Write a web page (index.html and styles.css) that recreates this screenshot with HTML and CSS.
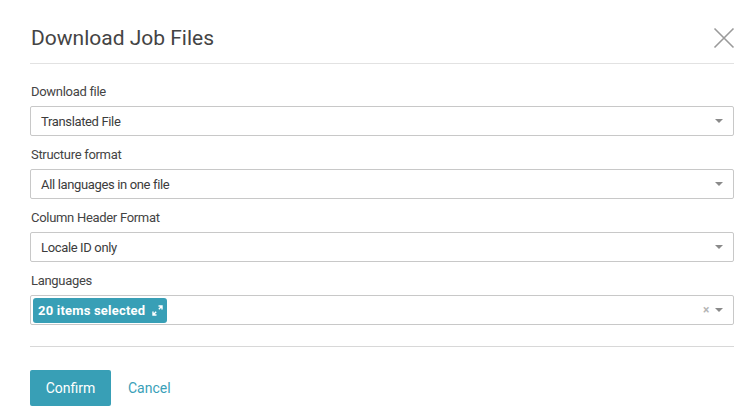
FILE: index.html
```html
<!DOCTYPE html>
<html>
<head>
<meta charset="utf-8">
<link rel="stylesheet" href="styles.css">
</head>
<body>
<div class="modal">
  <div class="modal-header">
    <h1 class="modal-title">Download Job Files</h1>
    <button class="close-btn" aria-label="Close">
      <svg width="22" height="22" viewBox="0 0 22 22"><path d="M1.5 1.5 L20.5 20.5 M20.5 1.5 L1.5 20.5" stroke="#9a9a9a" stroke-width="1.6" fill="none"/></svg>
    </button>
  </div>
  <div class="modal-body">
    <div class="field">
      <label class="field-label">Download file</label>
      <div class="select">
        <span class="select-value">Translated File</span>
        <span class="caret"></span>
      </div>
    </div>
    <div class="field">
      <label class="field-label">Structure format</label>
      <div class="select">
        <span class="select-value">All languages in one file</span>
        <span class="caret"></span>
      </div>
    </div>
    <div class="field">
      <label class="field-label">Column Header Format</label>
      <div class="select">
        <span class="select-value">Locale ID only</span>
        <span class="caret"></span>
      </div>
    </div>
    <div class="field">
      <label class="field-label">Languages</label>
      <div class="select multi">
        <span class="tag">20 items selected
          <svg class="expand" width="11" height="11" viewBox="0 0 11 11"><path d="M6.5 1 H10 V4.5 M10 1 L6.8 4.2 M4.5 10 H1 V6.5 M1 10 L4.2 6.8" stroke="#fff" stroke-width="1.4" fill="none"/></svg>
        </span>
        <span class="clear">×</span>
        <span class="caret"></span>
      </div>
    </div>
  </div>
  <div class="modal-footer">
    <button class="btn-primary">Confirm</button>
    <button class="btn-link">Cancel</button>
  </div>
</div>
</body>
</html>
```

FILE: styles.css
```css
html, body {
  margin: 0;
  padding: 0;
  background: #fff;
}
body {
  font-family: "Roboto", "Liberation Sans", sans-serif;
  color: #444;
}
.modal {
  padding: 0 22px 0 30px;
}
.modal-header {
  height: 64px;
  border-bottom: 1px solid #e2e2e2;
  display: flex;
  align-items: center;
  justify-content: space-between;
  padding-top: 12px;
  box-sizing: border-box;
}
.modal-title {
  margin: 0 0 0 1px;
  font-size: 21px;
  font-weight: 400;
  color: #444;
}
.close-btn {
  border: 0;
  background: none;
  padding: 0;
  margin-right: -1px;
  display: flex;
  cursor: pointer;
}
.modal-body {
  padding-top: 17px;
}
.field {
  margin-bottom: 8px;
}
.field-label {
  display: block;
  font-size: 13px;
  line-height: 22px;
  margin: 0 0 3px 1px;
  color: #444;
  letter-spacing: -0.3px;
}
.select {
  height: 30px;
  box-sizing: border-box;
  border: 1px solid #c8c8c8;
  border-radius: 2px;
  display: flex;
  align-items: center;
  padding: 0 10px 0 10px;
  font-size: 13px;
  color: #3c3c3c;
  letter-spacing: -0.35px;
}
.select-value {
  flex: 1;
}
.caret {
  width: 0;
  height: 0;
  border-left: 4px solid transparent;
  border-right: 4px solid transparent;
  border-top: 4px solid #8a8a8a;
}
.multi {
  padding-left: 2px;
  margin-bottom: 0;
}
.tag {
  background: #389fb6;
  color: #fff;
  font-weight: 700;
  font-size: 13px;
  height: 25px;
  border-radius: 3px;
  display: flex;
  align-items: center;
  padding: 0 4px 0 5px;
  gap: 7px;
  letter-spacing: 0.2px;
}
.expand {
  display: block;
}
.clear {
  margin-left: auto;
  margin-right: 6px;
  color: #b5b5b5;
  font-size: 12px;
  font-weight: 700;
}
.modal-footer {
  margin-top: 21px;
  border-top: 1px solid #d8d8d8;
  padding-top: 23px;
  display: flex;
  align-items: center;
  gap: 17px;
}
.btn-primary {
  height: 36px;
  width: 81px;
  border: 0;
  border-radius: 2px;
  background: #389fb6;
  color: #fff;
  font-family: inherit;
  font-size: 14px;
  padding: 0;
}
.btn-link {
  border: 0;
  background: none;
  color: #3a9fb8;
  font-family: inherit;
  font-size: 14px;
  padding: 0;
}
```
